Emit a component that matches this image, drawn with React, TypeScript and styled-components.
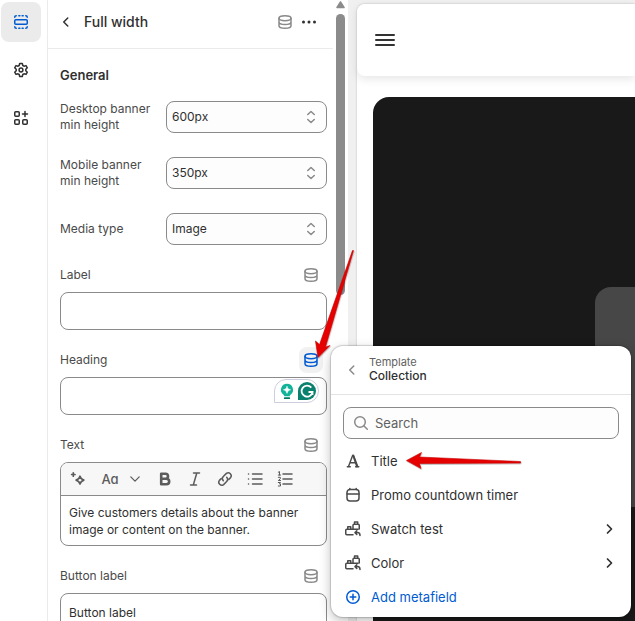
import React from 'react';
import styled, { createGlobalStyle, css } from 'styled-components';

const GlobalStyle = createGlobalStyle`
  *, *::before, *::after { box-sizing: border-box; }
  body {
    margin: 0;
    background: #f0f0f0;
    color: #303030;
    font-family: Inter, "Liberation Sans", sans-serif;
    font-size: 13px;
    line-height: 16px;
  }
  button, input, select, textarea { font: inherit; color: inherit; }
  h1, h2, p { margin: 0; }
`;

/* ---------- layout ---------- */

const Page = styled.div`
  position: relative;
  display: grid;
  grid-template-columns: 48px 300px minmax(0, 1fr);
  height: 100vh;
  overflow: hidden;
`;

const Rail = styled.nav`
  display: flex;
  flex-direction: column;
  align-items: center;
  gap: 8px;
  padding: 2px 6px 0 0;
  background: #fff;
  border-right: 1px solid #ebebeb;
`;

const RailButton = styled.button<{ $active?: boolean }>`
  display: grid;
  place-items: center;
  width: 40px;
  height: 40px;
  padding: 0;
  border: 0;
  border-radius: 8px;
  background: ${(p) => (p.$active ? '#ebebeb' : 'transparent')};
  color: ${(p) => (p.$active ? '#005bd3' : '#303030')};
`;

const Sidebar = styled.aside`
  display: grid;
  grid-template-columns: minmax(0, 1fr) 15px;
  min-height: 0;
  overflow: hidden;
  background: #fff;
`;

const Settings = styled.div`
  min-width: 0;
`;

const ScrollTrack = styled.div`
  display: flex;
  flex-direction: column;
  align-items: center;
  gap: 5px;
  padding-top: 1px;
  color: #8b8b8b;
`;

const ScrollThumb = styled.div`
  width: 9px;
  height: 281px;
  border-radius: 5px;
  background: #8b8b8b;
`;

const SettingsHeader = styled.header`
  display: flex;
  align-items: center;
  height: 49px;
  padding: 0 12px 4px 6px;
  border-bottom: 1px solid #ebebeb;
`;

const PageTitle = styled.h1`
  flex: 1;
  padding-left: 6px;
  font-size: 14px;
  font-weight: 550;
  line-height: 20px;
`;

const IconButton = styled.button<{ $active?: boolean; $strong?: boolean }>`
  display: grid;
  place-items: center;
  width: 24px;
  height: 26px;
  padding: 0;
  border: 0;
  border-radius: 8px;
  background: ${(p) => (p.$active ? '#f1f1f1' : 'transparent')};
  color: ${(p) => (p.$active ? '#005bd3' : p.$strong ? '#303030' : '#8a8a8a')};
`;

const Form = styled.form`
  padding: 17px 6px 0 12px;
  font-size: 12px;
`;

const SectionTitle = styled.h2`
  margin-bottom: 17px;
  font-size: 13px;
  font-weight: 600;
  line-height: 18px;
`;

const SelectList = styled.div`
  display: grid;
  gap: 24px;
  margin-bottom: 17px;
`;

const SelectRow = styled.div`
  display: grid;
  grid-template-columns: minmax(0, 98px) minmax(0, 1fr);
  align-items: center;
  column-gap: 8px;
  color: #4a4a4a;
`;

const SelectBox = styled.div`
  display: grid;
  align-items: center;
  color: #8a8a8a;

  > * { grid-area: 1 / 1; }
  > svg { justify-self: end; margin-right: 6px; pointer-events: none; }
`;

const controlBorder = css`
  border: 1px solid #8a8a8a;
  border-radius: 8px;
  outline: 0;
`;

const Select = styled.select`
  ${controlBorder}
  appearance: none;
  width: 100%;
  height: 32px;
  padding: 0 28px 0 5px;
  background: #fdfdfd;
  color: #303030;
`;

const Field = styled.div`
  display: grid;
  gap: 4px;
  margin-bottom: 17px;
`;

const FieldHead = styled.div`
  display: flex;
  align-items: center;
  justify-content: space-between;
  height: 26px;
  padding-right: 4px;
  color: #4a4a4a;
`;

const FieldControl = styled.div`
  position: relative;
`;

const TextInput = styled.input`
  ${controlBorder}
  display: block;
  width: 100%;
  height: 38px;
  padding: 0 8px;
  background: #fff;
`;

const AssistantBadge = styled.div`
  position: absolute;
  top: 2px;
  right: 8px;
  display: flex;
  align-items: center;
  height: 24px;
  padding: 0 1px 0 2px;
  border: 1px solid #cdcfdf;
  border-radius: 12px 12px 12px 0;
  background: #fff;
`;

const BadgeButton = styled.button`
  display: grid;
  place-items: center;
  width: 20px;
  height: 20px;
  padding: 0;
  border: 0;
  background: none;
`;

const Editor = styled.div`
  ${controlBorder}
  overflow: hidden;
  background: #fff;
`;

const Toolbar = styled.div`
  display: flex;
  align-items: center;
  height: 33px;
  padding-left: 2px;
  border-bottom: 1px solid #8a8a8a;
  background: #f7f7f7;
`;

const ToolButton = styled.button<{ $wide?: boolean }>`
  display: flex;
  align-items: center;
  justify-content: center;
  gap: 9px;
  width: ${(p) => (p.$wide ? '57px' : '30px')};
  height: 28px;
  padding: 0;
  border: 0;
  background: none;
  color: #5c5c5c;
`;

const TypeSample = styled.span`
  font-size: 13px;
  font-weight: 500;
  font-feature-settings: 'cv11';
`;

const EditorText = styled.textarea`
  display: block;
  width: 100%;
  height: 49px;
  padding: 8px 8px 0;
  border: 0;
  outline: 0;
  resize: none;
  overflow: hidden;
  background: transparent;
  line-height: 17px;
`;

/* ---------- preview ---------- */

const Preview = styled.main`
  min-width: 0;
  padding: 4px 0 0 9px;
  overflow: hidden;
  background: #f0f0f0;
`;

const Store = styled.div`
  height: 100%;
  border-radius: 8px 0 0 0;
  background: #fff;
  box-shadow: 0 0 2px rgba(0, 0, 0, 0.25);
`;

const StoreHeader = styled.header`
  display: flex;
  align-items: center;
  height: 72px;
  padding-left: 16px;
  border-radius: 8px 0 0 8px;
  background: #fff;
  box-shadow: 0 3px 10px rgba(0, 0, 0, 0.1);
`;

const MenuButton = styled.button`
  display: grid;
  padding: 0;
  border: 0;
  background: none;
  color: #333;
`;

const Banner = styled.section`
  display: flex;
  justify-content: flex-end;
  height: 100%;
  margin: 21px 0 0 16px;
  padding-top: 190px;
  border-radius: 16px 0 0 0;
  background: #191919;
`;

const BannerPanel = styled.div`
  width: 40px;
  height: 220px;
  border-radius: 16px 0 0 16px;
  background: #474747;
`;

/* ---------- metafield popover ---------- */

const Popover = styled.div`
  position: absolute;
  top: 346px;
  left: 331px;
  width: 300px;
  padding-bottom: 3px;
  border-radius: 12px;
  background: #fff;
  box-shadow: 0 0 1px 1px rgba(0, 0, 0, 0.16), 0 4px 12px rgba(0, 0, 0, 0.26);
`;

const PopoverHeader = styled.header`
  display: flex;
  align-items: center;
  gap: 5px;
  height: 49px;
  padding-left: 9px;
  border-bottom: 1px solid #e3e3e3;
`;

const Crumbs = styled.div`
  padding-bottom: 4px;
`;

const Crumb = styled.p`
  color: #616161;
  font-size: 11px;
  line-height: 14px;
`;

const CrumbTitle = styled.h2`
  font-size: 12px;
  font-weight: 550;
  line-height: 13px;
`;

const SearchBox = styled.label`
  ${controlBorder}
  display: flex;
  align-items: center;
  gap: 4px;
  height: 32px;
  margin: 12px 12px 5px;
  padding: 0 7px;
  background: #fdfdfd;
  color: #8a8a8a;
`;

const SearchInput = styled.input`
  flex: 1;
  min-width: 0;
  padding: 0;
  border: 0;
  outline: 0;
  background: transparent;

  &::placeholder { color: #616161; opacity: 1; }
`;

const ItemButton = styled.button<{ $accent?: boolean }>`
  display: flex;
  align-items: center;
  gap: 8px;
  width: 100%;
  height: 34px;
  padding: 0 12px;
  border: 0;
  background: none;
  color: ${(p) => (p.$accent ? '#005bd3' : '#303030')};
  text-align: left;

  > svg:first-child { color: ${(p) => (p.$accent ? '#005bd3' : '#4a4a4a')}; }
`;

const ItemText = styled.span`
  flex: 1;
`;

const Arrows = styled.svg`
  position: absolute;
  top: 0;
  left: 0;
  pointer-events: none;
`;

/* ---------- icons ---------- */

type IconProps = { size?: number; width?: number; children: React.ReactNode };

const Icon = ({ size = 20, width = 1.5, children }: IconProps) => (
  <svg
    width={size}
    height={size}
    viewBox="0 0 20 20"
    fill="none"
    stroke="currentColor"
    strokeWidth={width}
    strokeLinecap="round"
    strokeLinejoin="round"
    aria-hidden="true"
  >
    {children}
  </svg>
);

const SectionsIcon = () => (
  <Icon>
    <rect x="3.75" y="7.75" width="12.5" height="4.5" rx="1" />
    <path d="M3.75 5.2c0-.9.6-1.45 1.5-1.45M7.8 3.75h1.1M11.1 3.75h1.1M14.75 3.75c.9 0 1.5.55 1.5 1.45M3.75 14.8c0 .9.6 1.45 1.5 1.45M7.8 16.25h1.1M11.1 16.25h1.1M14.75 16.25c.9 0 1.5-.55 1.5-1.45" />
  </Icon>
);

const GearIcon = () => (
  <Icon>
    <circle cx="10" cy="10" r="1.900" />
    <path d="M8.700 3.500h2.600l.5 2 1.200.7 2-.6 1.300 2.200-1.500 1.500v1.400l1.500 1.500-1.300 2.200-2-.6-1.200.7-.5 2H8.700l-.5-2-1.200-.7-2 .6-1.300-2.200 1.500-1.500V9.300L3.700 7.800 5 5.600l2 .6 1.200-.7z" />
  </Icon>
);

const AppsIcon = () => (
  <Icon>
    <rect x="3.75" y="3.75" width="4.5" height="4.5" rx="1" />
    <rect x="3.75" y="11.75" width="4.5" height="4.5" rx="1" />
    <rect x="11.75" y="11.75" width="4.5" height="4.5" rx="1" />
    <path d="M14 3.5v5M11.5 6h5" />
  </Icon>
);

const DatabaseIcon = () => (
  <Icon>
    <ellipse cx="10" cy="6.25" rx="6" ry="2.4" />
    <path d="M4 6.25v7.5c0 1.4 2.7 2.5 6 2.5s6-1.100 6-2.500v-7.500M4 10c0 1.400 2.700 2.500 6 2.500s6-1.100 6-2.500" />
  </Icon>
);

const ChevronLeft = () => (
  <Icon><path d="M11.75 6 7.75 10l4 4" /></Icon>
);

const ChevronRight = () => (
  <Icon width={1.7}><path d="m8.5 6 4 4-4 4" /></Icon>
);

const ChevronDown = () => (
  <Icon size={14} width={1.8}><path d="m4 7 6 6 6-6" /></Icon>
);

const DotsIcon = () => (
  <Icon>
    <g fill="currentColor" stroke="none">
      <circle cx="4.5" cy="10" r="1.5" />
      <circle cx="10" cy="10" r="1.5" />
      <circle cx="15.5" cy="10" r="1.5" />
    </g>
  </Icon>
);

const SelectIcon = () => (
  <Icon><path d="M6.75 7.5 10 4.5l3.25 3M6.75 12.5 10 15.500l3.250-3" /></Icon>
);

const SparkleIcon = () => (
  <Icon width={1.7}>
    <path d="M12 7.200c.5 2 1.800 3.300 3.900 3.900-2.100.6-3.400 1.900-3.900 3.900-.5-2-1.800-3.300-3.900-3.900 2.100-.6 3.400-1.900 3.900-3.900z" />
    <path d="M5.300 3.800v3.400M3.600 5.500H7" />
  </Icon>
);

const BoldIcon = () => (
  <Icon width={2.6}>
    <path d="M6.200 4.700h4.300a2.500 2.500 0 0 1 0 5H6.200zM6.200 9.700h5.200a2.800 2.800 0 0 1 0 5.600H6.200z" />
  </Icon>
);

const ItalicIcon = () => (
  <Icon><path d="M8.500 4h6M5.500 16h6M11.800 4 8.300 16" /></Icon>
);

const LinkIcon = () => (
  <Icon>
    <path d="M8.300 11.700a3 3 0 0 1 0-4.200l3.100-3.100a3 3 0 0 1 4.200 4.200l-1.800 1.800" />
    <path d="M11.700 8.300a3 3 0 0 1 0 4.200l-3.100 3.100a3 3 0 0 1-4.200-4.200l1.800-1.800" />
  </Icon>
);

const BulletIcon = () => (
  <Icon>
    <path d="M7.500 5h9.500M7.500 10h9.500M7.500 15h9.500M3.500 5h.1M3.500 10h.1M3.500 15h.1" />
  </Icon>
);

const NumberedIcon = () => (
  <Icon>
    <path d="M8 5h9M8 10h9M8 15h9" />
    <path strokeWidth="1" d="M3.300 3.200 4.500 2.600v3.400M3.300 6h2.400M3.300 8.300h2v1.500l-2 1.700h2.300M3.300 13.500h2.200l-1 1.500h1v2H3.300" />
  </Icon>
);

const SearchIcon = () => (
  <Icon>
    <circle cx="9" cy="9" r="5.300" />
    <path d="m13 13 3.300 3.300" />
  </Icon>
);

const TitleIcon = () => (
  <Icon width={1.4}>
    <path d="M5.500 15.500 9.700 4.200h.8l4.200 11.300M7 11.800h6M4.300 15.700h3M12.600 15.700h3.200" />
    <path strokeWidth="1.800" d="m10.300 5 3.700 10.500" />
  </Icon>
);

const CalendarIcon = () => (
  <Icon>
    <rect x="4" y="4.500" width="12" height="11.500" rx="3" />
    <path d="M4 9h12M6.800 3.500v1M13.200 3.500v1" />
  </Icon>
);

const ReferenceIcon = () => (
  <Icon>
    <path d="M10 15.750H3.750c-.6 0-1-.4-1-1v-3.500c0-.6.4-1 1-1H10M4.750 10v-2.300h3V10M10 10.250V6.200c0-.6.4-1 1-1h4.250c.6 0 1 .4 1 1V10M11.500 5V3h3.200v2M10 10.250h5" />
    <path d="m13.800 11.800-1.800 1.800 1.800 1.800M12.200 13.600h2.300c1.500 0 2.500.9 2.500 2.900" />
  </Icon>
);

const AddIcon = () => (
  <Icon>
    <circle cx="10" cy="10" r="6.250" />
    <path d="M10 7.200v5.600M7.200 10h5.600" />
  </Icon>
);

const BulbIcon = () => (
  <svg width="18" height="18" viewBox="0 0 18 18" aria-hidden="true">
    <path d="M9 1.800a6 6 0 0 0-3.500 10.900c.5.400.7.900.8 1.600h5.400c.1-.7.300-1.200.8-1.600A6 6 0 0 0 9 1.800z" fill="#13b39a" />
    <path d="M9 4.200c.5 2.200 1.400 3.100 3.600 3.600-2.200.5-3.100 1.400-3.600 3.600-.5-2.200-1.400-3.100-3.600-3.600C7.600 7.300 8.500 6.400 9 4.200z" fill="#fff" stroke="#fff" strokeWidth="0.600" />
    <path d="M6.700 16.200h4.600" stroke="#067a69" strokeWidth="1.700" strokeLinecap="round" />
  </svg>
);

const AssistantIcon = () => (
  <svg width="18" height="18" viewBox="0 0 18 18" aria-hidden="true">
    <path d="M9 0a9 9 0 1 1 0 18H0V9a9 9 0 0 1 9-9z" fill="#0a806f" />
    <path d="M13.300 5.600A5.500 5.500 0 1 0 14.500 10h-4M14.500 10v3" fill="none" stroke="#fff" strokeWidth="1.800" />
  </svg>
);

/* ---------- content ---------- */

const selects = [
  { id: 'desktop-height', label: 'Desktop banner min height', value: '600px' },
  { id: 'mobile-height', label: 'Mobile banner min height', value: '350px' },
  { id: 'media-type', label: 'Media type', value: 'Image' },
];

const tools = [
  { name: 'Bold', icon: <BoldIcon /> },
  { name: 'Italic', icon: <ItalicIcon /> },
  { name: 'Link', icon: <LinkIcon /> },
  { name: 'Bulleted list', icon: <BulletIcon /> },
  { name: 'Numbered list', icon: <NumberedIcon /> },
];

const metafields = [
  { name: 'Title', icon: <TitleIcon /> },
  { name: 'Promo countdown timer', icon: <CalendarIcon /> },
  { name: 'Swatch test', icon: <ReferenceIcon />, nested: true },
  { name: 'Color', icon: <ReferenceIcon />, nested: true },
];

type SettingFieldProps = {
  id: string;
  label: string;
  active?: boolean;
  children: React.ReactNode;
};

const SettingField = ({ id, label, active, children }: SettingFieldProps) => (
  <Field>
    <FieldHead>
      <label htmlFor={id}>{label}</label>
      <IconButton type="button" $active={active} aria-label={`Connect ${label} to dynamic source`}>
        <DatabaseIcon />
      </IconButton>
    </FieldHead>
    <FieldControl>{children}</FieldControl>
  </Field>
);

export default function App() {
  return (
    <>
      <GlobalStyle />
      <Page>
        <Rail aria-label="Editor">
          <RailButton $active aria-label="Sections"><SectionsIcon /></RailButton>
          <RailButton aria-label="Theme settings"><GearIcon /></RailButton>
          <RailButton aria-label="App embeds"><AppsIcon /></RailButton>
        </Rail>

        <Sidebar>
          <Settings>
            <SettingsHeader>
              <IconButton $strong aria-label="Back"><ChevronLeft /></IconButton>
              <PageTitle>Full width</PageTitle>
              <IconButton aria-label="Dynamic sources"><DatabaseIcon /></IconButton>
              <IconButton $strong aria-label="More actions"><DotsIcon /></IconButton>
            </SettingsHeader>
            <Form>
              <SectionTitle>General</SectionTitle>
              <SelectList>
                {selects.map((s) => (
                  <SelectRow key={s.id}>
                    <label htmlFor={s.id}>{s.label}</label>
                    <SelectBox>
                      <Select id={s.id} defaultValue={s.value}>
                        <option>{s.value}</option>
                      </Select>
                      <SelectIcon />
                    </SelectBox>
                  </SelectRow>
                ))}
              </SelectList>
              <SettingField id="label" label="Label">
                <TextInput id="label" />
              </SettingField>
              <SettingField id="heading" label="Heading" active>
                <TextInput id="heading" />
                <AssistantBadge>
                  <BadgeButton type="button" aria-label="Suggestions"><BulbIcon /></BadgeButton>
                  <BadgeButton type="button" aria-label="Writing assistant"><AssistantIcon /></BadgeButton>
                </AssistantBadge>
              </SettingField>
              <SettingField id="text" label="Text">
                <Editor>
                  <Toolbar>
                    <ToolButton type="button" aria-label="Generate text"><SparkleIcon /></ToolButton>
                    <ToolButton type="button" $wide aria-label="Formatting">
                      <TypeSample>Aa</TypeSample>
                      <ChevronDown />
                    </ToolButton>
                    {tools.map((t) => (
                      <ToolButton key={t.name} type="button" aria-label={t.name}>{t.icon}</ToolButton>
                    ))}
                  </Toolbar>
                  <EditorText
                    id="text"
                    spellCheck={false}
                    defaultValue="Give customers details about the banner image or content on the banner."
                  />
                </Editor>
              </SettingField>
              <SettingField id="button-label" label="Button label">
                <TextInput id="button-label" defaultValue="Button label" />
              </SettingField>
            </Form>
          </Settings>
          <ScrollTrack aria-hidden="true">
            <svg width="9" height="8" viewBox="0 0 9 8">
              <path d="M4.500 1 8 6.500H1z" fill="currentColor" stroke="currentColor" strokeLinejoin="round" strokeWidth="1.500" />
            </svg>
            <ScrollThumb />
          </ScrollTrack>
        </Sidebar>

        <Preview>
          <Store>
            <StoreHeader>
              <MenuButton aria-label="Menu">
                <svg width="24" height="24" viewBox="0 0 24 24" stroke="currentColor" strokeWidth="2" strokeLinecap="round" aria-hidden="true">
                  <path d="M3 7h18M3 12h18M3 17h18" />
                </svg>
              </MenuButton>
            </StoreHeader>
            <Banner><BannerPanel /></Banner>
          </Store>
        </Preview>

        <Popover role="dialog" aria-label="Connect dynamic source">
          <PopoverHeader>
            <IconButton aria-label="Back to templates"><ChevronLeft /></IconButton>
            <Crumbs>
              <Crumb>Template</Crumb>
              <CrumbTitle>Collection</CrumbTitle>
            </Crumbs>
          </PopoverHeader>
          <SearchBox>
            <SearchIcon />
            <SearchInput type="text" placeholder="Search" aria-label="Search" />
          </SearchBox>
          {metafields.map((m) => (
            <ItemButton key={m.name}>
              {m.icon}
              <ItemText>{m.name}</ItemText>
              {m.nested && <ChevronRight />}
            </ItemButton>
          ))}
          <ItemButton $accent>
            <AddIcon />
            <ItemText>Add metafield</ItemText>
          </ItemButton>
        </Popover>

        <Arrows width="635" height="621" viewBox="0 0 635 621" aria-hidden="true">
          <defs>
            <filter id="arrow-shadow" x="-20%" y="-20%" width="140%" height="150%">
              <feDropShadow dx="0.500" dy="1" stdDeviation="0.600" floodOpacity="0.300" />
            </filter>
          </defs>
          <g fill="#e60000" stroke="#c40808" strokeWidth="0.600" strokeLinejoin="round" filter="url(#arrow-shadow)">
            <path d="M353.500 250.500 325.500 347 330 345.500 318 357.500 315.500 341 319.500 344.500 352.500 250.500z" />
            <path d="M520.500 461.500v1.500L419.500 463.500 421 468.500 406.500 460.500 421.500 452.500 419.500 457z" />
          </g>
        </Arrows>
      </Page>
    </>
  );
}
